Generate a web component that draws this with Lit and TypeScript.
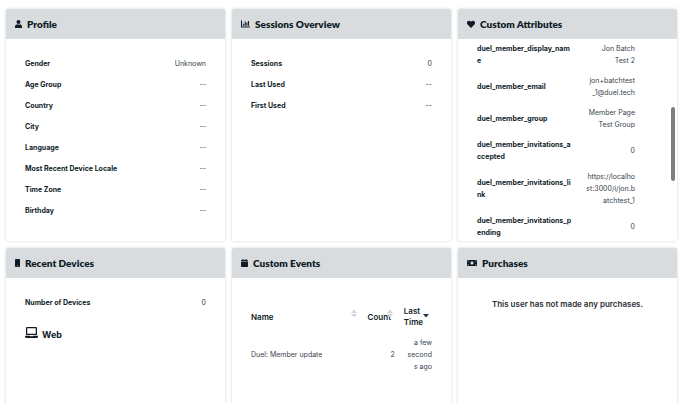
import { LitElement, html, css, svg, nothing } from "lit";
import { customElement, property } from "lit/decorators.js";

const icons: Record<string, { box: string; w: number; h: number; body: unknown }> = {
  user: {
    box: "0 0 14 16", w: 7, h: 8,
    body: svg`<circle cx="7" cy="4.2" r="4"/><path d="M0 16v-2.6C0 10.500 2 9.200 4.200 9.200h5.600c2.200 0 4.200 1.300 4.200 4.200V16z"/>`,
  },
  chart: {
    box: "0 0 17 15", w: 9, h: 8,
    body: svg`<path d="M0 1h2v11h15v2H0zM4 7h2v4H4zM7 3h2v8H7zM10 5h2v6h-2zM13 2h2.200v9H13z"/>`,
  },
  heart: {
    box: "0 0 16 15", w: 8, h: 8,
    body: svg`<path d="M14.500 2C12.700.4 10 .7 8.400 2.400L8 2.900l-.4-.5C6 .7 3.300.4 1.500 2c-2 1.700-2.100 4.800-.3 6.700l6.200 6.100c.4.300.8.300 1.200 0l6.200-6.100c1.800-1.900 1.700-5-.3-6.700z"/>`,
  },
  phone: {
    box: "0 0 10 16", w: 5, h: 8,
    body: svg`<path fill-rule="evenodd" d="M1.500 0h7Q10 0 10 1.500v13Q10 16 8.500 16h-7Q0 16 0 14.500v-13Q0 0 1.500 0zM4 13.200v1.200h2v-1.200z"/>`,
  },
  calendar: {
    box: "0 0 14 16", w: 7, h: 8,
    body: svg`<path d="M0 5V3.500Q0 2 1.500 2H3V0h2v2h4V0h2v2h1.500Q14 2 14 3.500V5zM0 6h14v8.500Q14 16 12.500 16h-11Q0 16 0 14.500z"/>`,
  },
  money: {
    box: "0 0 20 12", w: 10, h: 6,
    body: svg`<path fill-rule="evenodd" d="M1 0h18q1 0 1 1v10q0 1-1 1H1q-1 0-1-1V1q0-1 1-1zM10 2.800C8.300 2.800 7 4.200 7 6s1.300 3.200 3 3.200S13 7.800 13 6s-1.300-3.200-3-3.200zM1.500 8.500v2h2q0-2-2-2zM1.500 3.500v-2h2q0 2-2 2zM18.500 8.500v2h-2q0-2 2-2zM18.500 3.500v-2h-2q0 2 2 2z"/>`,
  },
  laptop: {
    box: "0 0 26 22", w: 13, h: 11,
    body: svg`<path fill-rule="evenodd" d="M4 0h18q2 0 2 2v14H2V2q0-2 2-2zM4.500 2.300v11.400h17V2.300zM0 17.500h10q0 1.200 1 1.200h4q1 0 1-1.200h10v1.500q0 3-3 3H3q-3 0-3-3z"/>`,
  },
};

const icon = (name: string) => {
  const i = icons[name];
  return html`<svg viewBox=${i.box} width=${i.w} height=${i.h} fill="currentColor" aria-hidden="true">${i.body}</svg>`;
};

const base = css`
  * { box-sizing: border-box; }
  svg { display: block; flex: none; }
  h2, h3, p, dl, dd { margin: 0; }
`;

@customElement("info-card")
class InfoCard extends LitElement {
  @property() heading = "";
  @property() icon = "";

  static styles = [base, css`
    :host {
      display: flex; flex-direction: column; min-width: 0; overflow: hidden;
      background: #fff; border-radius: 2px; box-shadow: 0 0 3px rgba(20, 30, 40, 0.2);
    }
    .head {
      flex: none; display: flex; align-items: center; gap: 5px;
      height: 30px; padding: 0 9px; background: #d8dcdf;
    }
    .title { font-family: Lato, sans-serif; font-size: 10px; line-height: 12px; font-weight: 800; }
    .body { flex: 1; min-height: 0; position: relative; overflow: hidden; }
  `];

  render() {
    return html`
      <header class="head">${icon(this.icon)}<h2 class="title">${this.heading}</h2></header>
      <div class="body"><slot></slot></div>`;
  }
}

const profile = ["Age Group", "Country", "City", "Language", "Most Recent Device Locale", "Time Zone", "Birthday"];

const attributes = [
  ["duel_member_display_name", "Jon Batch Test 2"],
  ["duel_member_email", "jon+batchtest_1@duel.tech"],
  ["duel_member_group", "Member Page Test Group"],
  ["duel_member_invitations_accepted", "0"],
  ["duel_member_invitations_link", "https://localhost:3000/i/jon.batchtest_1"],
  ["duel_member_invitations_pending", "0"],
];

@customElement("app-root")
class AppRoot extends LitElement {
  static styles = [base, css`
    :host {
      display: block; height: 100vh; overflow: hidden; background: #fff; color: #0f1c27;
      font-family: Inter, "Open Sans", sans-serif; font-size: 7px; line-height: 12px;
    }
    .board {
      display: grid; grid-template-columns: repeat(3, minmax(0, 1fr));
      grid-auto-rows: 232px; gap: 7px; padding: 9px 11px 0 6px;
    }
    .facts { display: grid; gap: 9px; padding: 19px 19px 18px; }
    .fact { display: flex; justify-content: space-between; }
    .fact dt, .attribute dt { font-weight: 700; }
    .fact dd, .attribute dd { color: #3a444d; text-align: right; }
    .attributes { display: grid; gap: 8px; padding: 4px 42px 0 19px; }
    .attribute {
      display: grid; grid-template-columns: 2fr 1fr; column-gap: 13px;
      align-items: center; overflow-wrap: anywhere;
    }
    .attribute .url { margin-left: -2px; word-break: break-all; }
    .thumb {
      position: absolute; right: 2px; top: 68px; width: 4px; height: 74px;
      border-radius: 2px; background: #7f7f7f;
    }
    .device { display: flex; align-items: center; gap: 4px; padding: 0 19px; margin-top: -4px; }
    .device h3 { font-size: 9px; line-height: 12px; padding-top: 6px; font-weight: 700; }
    .empty { padding: 20px 19px; text-align: center; font-size: 8px; font-weight: 600; color: #2b2f33; }
    .events { padding: 21px 19px; }
    table { width: 100%; table-layout: fixed; border-collapse: collapse; }
    th, td { padding: 0; }
    th { height: 36px; text-align: left; }
    td { height: 40px; color: #3a444d; overflow-wrap: anywhere; }
    .name { width: 60%; }
    .count { width: 20%; }
    td.count { text-align: right; padding-right: 1px; }
    td.last { text-align: right; padding-left: 10px; }
    .sort {
      display: flex; position: relative; align-items: center; width: 100%; border: 0; padding: 0;
      background: none; font: inherit; font-size: 8px; line-height: 11px; font-weight: 600; color: inherit; text-align: left;
    }
    .count .sort, .last .sort { padding-left: 8px; }
    .arrows { position: absolute; right: 3px; top: 50%; margin-top: -8px; color: #d3d6d9; }
    .arrows.active { color: #2b3640; }
  `];

  fact(label: string, value: string) {
    return html`<div class="fact"><dt>${label}</dt><dd>${value}</dd></div>`;
  }

  sorter(label: unknown, active = false) {
    return html`<button class="sort" type="button">${label}
      <svg class="arrows ${active ? "active" : ""}" viewBox="0 0 6 9" width="6" height="9" fill="currentColor" aria-hidden="true">
        ${active ? nothing : svg`<path d="M0 4 3 .5 6 4z"/>`}<path d="M0 5h6L3 8.500z"/>
      </svg></button>`;
  }

  render() {
    return html`
      <main class="board">
        <info-card heading="Profile" icon="user">
          <dl class="facts">${this.fact("Gender", "Unknown")}${profile.map((p) => this.fact(p, "--"))}</dl>
        </info-card>
        <info-card heading="Sessions Overview" icon="chart">
          <dl class="facts">
            ${this.fact("Sessions", "0")}${this.fact("Last Used", "--")}${this.fact("First Used", "--")}
          </dl>
        </info-card>
        <info-card heading="Custom Attributes" icon="heart">
          <dl class="attributes">
            ${attributes.map(([k, v]) => html`
              <div class="attribute"><dt>${k}</dt><dd class=${v.startsWith("http") ? "url" : ""}>${v}</dd></div>`)}
          </dl>
          <div class="thumb"></div>
        </info-card>
        <info-card heading="Recent Devices" icon="phone">
          <dl class="facts">${this.fact("Number of Devices", "0")}</dl>
          <div class="device">${icon("laptop")}<h3>Web</h3></div>
        </info-card>
        <info-card heading="Custom Events" icon="calendar">
          <div class="events">
            <table>
              <thead>
                <tr>
                  <th class="name">${this.sorter("Name")}</th>
                  <th class="count">${this.sorter("Count")}</th>
                  <th class="last">${this.sorter(html`Last<br>Time`, true)}</th>
                </tr>
              </thead>
              <tbody>
                <tr><td class="name">Duel: Member update</td><td class="count">2</td><td class="last">a few seconds ago</td></tr>
              </tbody>
            </table>
          </div>
        </info-card>
        <info-card heading="Purchases" icon="money">
          <p class="empty">This user has not made any purchases.</p>
        </info-card>
      </main>`;
  }
}
